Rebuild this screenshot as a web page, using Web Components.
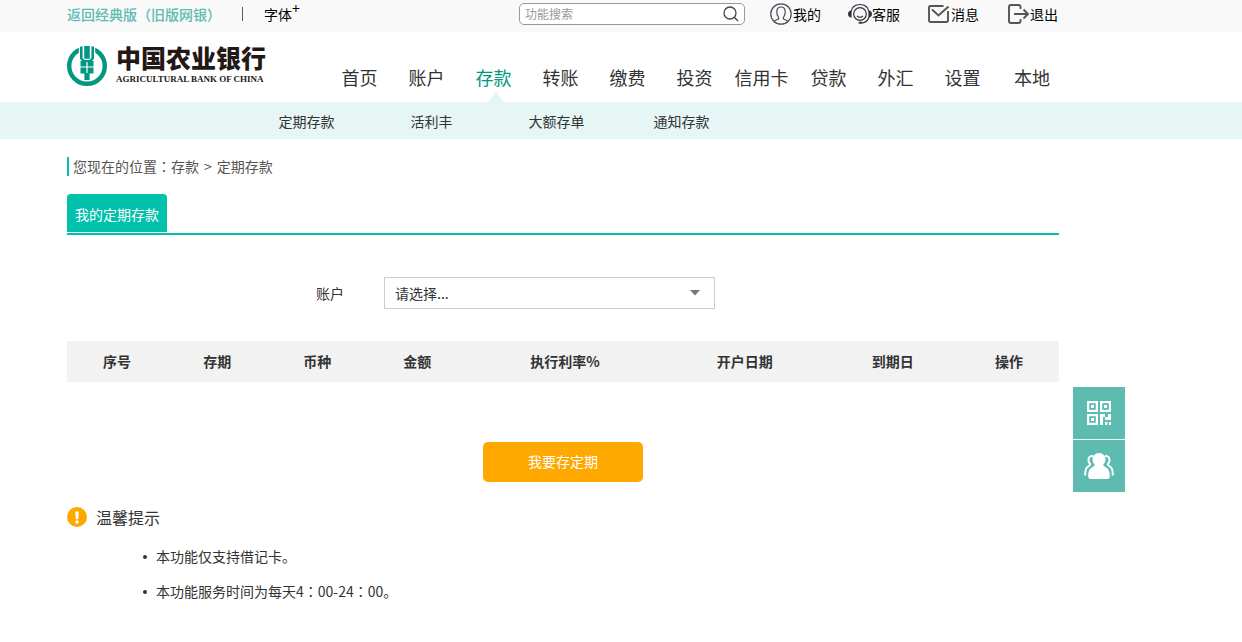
<!DOCTYPE html>
<html lang="zh-CN">
<head>
<meta charset="utf-8">
<meta name="viewport" content="width=device-width, initial-scale=1">
<title>定期存款</title>
<style>
  body {
    margin: 0;
    background: #fff;
    color: #333;
    font: 14px/20px "Noto Sans CJK SC", "Noto Sans", sans-serif;
    --teal: #009882;
    --mint: #00c1ac;
    --sage: #5dbcaf;
    --pale: #e6f6f5;
    --amber: #ffa800;
    --page: 1108px;
    --aside: 116px;
  }
</style>
</head>
<body>
<bank-app></bank-app>

<script>
const define = (name, html) => {
  const template = document.createElement('template');
  template.innerHTML = html;
  customElements.define(name, class extends HTMLElement {
    constructor() {
      super();
      this.attachShadow({ mode: 'open' }).append(template.content.cloneNode(true));
    }
  });
};

/* Centred column that leaves room for the side tools on the right */
define('page-column', `
  <style>
    :host { display: block; box-sizing: border-box; max-width: var(--page); margin: 0 auto; padding-right: var(--aside); }
  </style>
  <slot></slot>`);

/* Full-width punctuation, centred in its em box; kept free of white space because it is inline */
define('wide-mark', `<style>:host { font-family: "Noto Sans CJK TC", sans-serif; }</style><span lang="zh-TW"><slot></slot></span>`);

define('tool-link', `
  <style>
    :host { display: block; }
    a { display: flex; align-items: center; gap: 1px; color: #000; text-decoration: none; white-space: nowrap; }
    ::slotted(svg) { width: 22px; height: 22px; overflow: visible; }
  </style>
  <a href="#"><slot name="icon"></slot><span><slot></slot></span></a>`);

define('search-box', `
  <style>
    :host { display: block; }
    form { display: flex; align-items: center; box-sizing: border-box; width: 226px; height: 22px; border: 1px solid #999; border-radius: 5px; background: #fff; padding: 0 5px; margin: 0; }
    input { flex: 1; min-width: 0; border: 0; padding: 0; outline: 0; background: none; font: 12px/18px "Noto Sans CJK SC", sans-serif; color: #333; }
    input::placeholder { color: #999; opacity: 1; }
    button { display: flex; border: 0; padding: 0; background: none; }
  </style>
  <form>
    <input type="text" placeholder="功能搜索" aria-label="功能搜索">
    <button type="button" aria-label="搜索">
      <svg width="16" height="16" viewBox="0 0 16 16" fill="none" stroke="#444" stroke-width="1.3"><circle cx="7" cy="7" r="6"/><path d="M11.2 11.2 15 15"/></svg>
    </button>
  </form>`);

define('top-bar', `
  <style>
    :host { display: block; background: #f9f9f9; }
    .row { display: flex; align-items: center; height: 32px; padding-bottom: 4px; box-sizing: border-box; }
    .old { color: var(--sage); font-weight: 500; text-decoration: none; white-space: nowrap; }
    .bar { width: 1px; height: 14px; background: #5f5770; margin: 0 21px; }
    button { border: 0; padding: 0; background: none; color: #000; font: inherit; display: flex; white-space: nowrap; }
    sup { font-size: 14px; line-height: 8px; vertical-align: baseline; }
    search-box { margin: 0 25px 0 auto; }
    nav { display: flex; gap: 28px; margin-right: 1px; }
  </style>
  <page-column><div class="row">
    <a class="old" href="#">返回经典版<wide-mark>（</wide-mark>旧版网银<wide-mark>）</wide-mark></a>
    <span class="bar"></span>
    <button type="button">字体<sup>+</sup></button>
    <search-box></search-box>
    <nav aria-label="工具">
      <tool-link>
        <svg slot="icon" viewBox="0 0 22 22" fill="none" stroke="#4a4a58" stroke-width="1.2"><circle cx="11" cy="11" r="10.2"/><path d="M4.2 18.4c.5-1.3 2.3-1.5 3.700-2.100.9-.4 1-1.500.4-2.300C7 12.200 6.700 10.500 6.800 8.500 6.900 5.500 8.500 4 11 4s4.100 1.500 4.200 4.500c.1 2-.2 3.700-1.500 5.500-.6.800-.5 1.900.4 2.300 1.400.6 3.200.8 3.700 2.100"/></svg>我的
      </tool-link>
      <tool-link>
        <svg slot="icon" viewBox="0 0 22 22" fill="none" stroke="#33333f" stroke-width="1.2"><circle cx="11" cy="11" r="6.300"/><path d="M2.200 8.500C3 4 6.500 1.500 11 1.500S19 4 19.800 8.500M20 14c-1 3.500-3.500 5.500-7 6M8 13c1.700 1.700 4.300 1.700 6 0"/><path fill="#33333f" stroke="none" d="M2.600 7.500v7.200C.2 14.500-1 13-1 11s1.200-3.300 3.600-3.500ZM19.400 7.500v7.200c2.400-.2 3.600-1.700 3.600-3.700s-1.200-3.300-3.600-3.500Z"/><rect x="9.500" y="18.800" width="4" height="2" rx="1" fill="#33333f" stroke="none"/></svg>客服
      </tool-link>
      <tool-link>
        <svg slot="icon" viewBox="0 0 22 22" fill="none" stroke="#555" stroke-width="1.900"><path d="M15.500 3H2.200Q1 3 1 4.200v13.600Q1 19 2.200 19h16.600Q20 19 20 17.800V8M4 6.500l6.500 6L20.500 3.500"/></svg>消息
      </tool-link>
      <tool-link>
        <svg slot="icon" viewBox="0 0 22 22" fill="none" stroke="#555" stroke-width="1.900"><path d="M13.500 6V4q0-2-2-2H4Q2 2 2 4v14q0 2 2 2h7.500q2 0 2-2v-2M7 11h13.500M16.500 6.500 21 11l-4.500 4.500"/></svg>退出
      </tool-link>
    </nav>
  </div></page-column>`);

define('bank-logo', `
  <style>
    :host { display: block; }
    a { display: flex; align-items: center; gap: 9px; color: #231815; text-decoration: none; }
    svg { display: block; width: 40px; height: 40px; }
    .names { display: flex; flex-direction: column; white-space: nowrap; }
    .zh { font-size: 25px; line-height: 26px; font-weight: 900; }
    .en { font: bold 9px/18px "Liberation Serif", serif; }
  </style>
  <a href="#">
    <svg viewBox="0 0 40 40">
      <circle cx="20" cy="20" r="17.800" fill="none" stroke="#009882" stroke-width="4.400"/>
      <path fill="#fff" d="M11.800 0h16.400v12h-16.400Z"/>
      <path fill="#009882" d="M13 .8 15.600.3V12l2 2h4.800l2-2V.3L27 .8v12L24 16h-8l-3-3.200ZM17.200 0h5.600v12.800h-5.600Z"/>
      <path fill="#009882" d="M13.500 15h5.900v5.500h-5.900ZM20.600 15h5.900v5.500h-5.900ZM13.500 21.500h5.900V34h-2v-6.500h-3.900ZM20.600 21.500h5.900v6h-3.900V34h-2Z"/>
      <path fill="#009882" d="M19 27h2v7h-2Z"/>
    </svg>
    <span class="names"><span class="zh">中国农业银行</span><span class="en">AGRICULTURAL BANK OF CHINA</span></span>
  </a>`);

define('nav-item', `
  <style>
    :host { display: block; position: relative; text-align: center; }
    a { display: block; color: #333; font-size: 18px; line-height: 26px; padding-bottom: 12px; text-decoration: none; white-space: nowrap; }
    :host([active]) a { color: var(--teal); }
    :host([active])::after { content: ""; position: absolute; left: 50%; bottom: 0; margin-left: -6px; border: solid transparent; border-width: 0 8px 11px; border-bottom-color: var(--pale); }
  </style>
  <a href="#"><slot></slot></a>`);

define('main-header', `
  <style>
    :host { display: block; }
    .row { display: flex; justify-content: space-between; align-items: flex-end; height: 70px; }
    bank-logo { padding-bottom: 14px; }
    nav { display: grid; grid-template-columns: repeat(10, 67px) 72px; margin-right: -9px; }
  </style>
  <page-column><div class="row">
    <bank-logo></bank-logo>
    <nav aria-label="主导航">
      <nav-item>首页</nav-item><nav-item>账户</nav-item><nav-item active>存款</nav-item><nav-item>转账</nav-item><nav-item>缴费</nav-item><nav-item>投资</nav-item><nav-item>信用卡</nav-item><nav-item>贷款</nav-item><nav-item>外汇</nav-item><nav-item>设置</nav-item><nav-item>本地</nav-item>
    </nav>
  </div></page-column>`);

define('sub-nav', `
  <style>
    :host { display: block; background: var(--pale); }
    nav { display: grid; grid-template-columns: repeat(4, 125px); padding: 1px 0 0 177px; text-align: center; }
    a { color: #333; text-decoration: none; line-height: 36px; }
  </style>
  <page-column><nav aria-label="存款">
    <a href="#">定期存款</a><a href="#">活利丰</a><a href="#">大额存单</a><a href="#">通知存款</a>
  </nav></page-column>`);

define('bread-crumb', `
  <style>
    :host { display: flex; gap: 5px; border-left: 2px solid var(--mint); padding-left: 4px; line-height: 19px; color: #555; }
  </style>
  <slot></slot>`);

define('tab-strip', `
  <style>
    :host { display: block; border-bottom: 2px solid var(--mint); padding-bottom: 1px; }
    button { display: block; width: 100px; height: 38px; border: 0; border-radius: 4px 4px 0 0; background: var(--mint); color: #fff; font: inherit; padding: 2px 0 0; white-space: nowrap; }
  </style>
  <button type="button" role="tab" aria-selected="true"><slot></slot></button>`);

define('account-picker', `
  <style>
    :host { display: flex; align-items: center; padding-left: 249px; }
    label { width: 68px; }
    .box { display: grid; align-items: center; width: 331px; }
    .box > * { grid-area: 1 / 1; }
    select { appearance: none; box-sizing: border-box; width: 100%; height: 32px; border: 1px solid #ccc; border-radius: 0; background: #fff; color: #333; font: inherit; padding: 0 32px 0 10px; }
    svg { justify-self: end; margin-right: 15px; pointer-events: none; }
  </style>
  <label for="account">账户</label>
  <div class="box">
    <select id="account"><option>请选择...</option></select>
    <svg width="10" height="6" viewBox="0 0 10 6"><path d="M0 0h10L5 5.500Z" fill="#777"/></svg>
  </div>`);

define('deposit-table', `
  <style>
    :host { display: block; }
    table { width: 100%; table-layout: fixed; border-collapse: collapse; background: #f2f2f2; }
    th { height: 41px; box-sizing: border-box; padding: 0 0 2px; font-weight: 700; white-space: nowrap; }
    .s { width: 100px; } .rate { width: 195px; } .open { width: 164px; } .due { width: 132px; }
  </style>
  <table>
    <thead><tr>
      <th class="s" scope="col">序号</th><th class="s" scope="col">存期</th><th class="s" scope="col">币种</th><th class="s" scope="col">金额</th><th class="rate" scope="col">执行利率%</th><th class="open" scope="col">开户日期</th><th class="due" scope="col">到期日</th><th class="s" scope="col">操作</th>
    </tr></thead>
  </table>`);

define('action-button', `
  <style>
    :host { display: flex; justify-content: center; }
    button { width: 160px; height: 40px; border: 0; border-radius: 5px; background: var(--amber); color: #fff; font: inherit; padding: 0 0 2px; }
  </style>
  <button type="button"><slot></slot></button>`);

define('tip-panel', `
  <style>
    :host { display: block; }
    h2 { display: flex; align-items: center; gap: 9px; margin: 0; font-size: 16px; line-height: 20px; font-weight: 400; }
    ul { list-style: none; margin: 12px 0 0; padding: 0 0 0 76px; line-height: 35px; }
    li { display: flex; align-items: center; gap: 9px; }
    li::before { content: ""; width: 4px; height: 4px; border-radius: 50%; background: #333; }
  </style>
  <h2><svg width="20" height="20" viewBox="0 0 20 20"><circle cx="10" cy="10" r="10" fill="#ffa800"/><path fill="#fff" d="M8.200 4.500h3.600l-.6 7.700H8.800Z"/><circle cx="10" cy="15" r="1.700" fill="#fff"/></svg><span>温馨提示</span></h2>
  <ul>
    <li><span>本功能仅支持借记卡。</span></li>
    <li><span>本功能服务时间为每天4<wide-mark>：</wide-mark>00-24<wide-mark>：</wide-mark>00。</span></li>
  </ul>`);

define('side-tools', `
  <style>
    :host { display: grid; gap: 1px; align-content: start; width: 52px; }
    button { display: grid; place-items: center; height: 52px; border: 0; padding: 0; background: var(--sage); }
  </style>
  <button type="button" aria-label="二维码">
    <svg width="24" height="24" viewBox="0 0 24 24"><g fill="none" stroke="#fff" stroke-width="2.200"><rect x="1.100" y="1.100" width="8.800" height="8.800"/><rect x="14.100" y="1.100" width="8.800" height="8.800"/><rect x="1.100" y="14.100" width="8.800" height="8.800"/></g><path fill="#fff" d="M4 4h3v3H4ZM17 4h3v3h-3ZM4 17h3v3H4ZM13 13h5v3h3v-3h3v6h-6v-3h-2v8h-3ZM18 21h2.500v3H18ZM22 21h2v3h-2Z"/></svg>
  </button>
  <button type="button" aria-label="客户服务">
    <svg width="30" height="28" viewBox="0 0 30 28"><path fill="none" stroke="#fff" stroke-width="2" d="M9 4C5.500 3.500 4.300 6 4.500 8.500c.1 1.800.9 2.700 1.700 3.500-.2 1.900-2.200 2.300-3.400 3.700C1.500 17.200 1.200 20 1.200 23.500M21 4c3.500-.5 4.700 2 4.500 4.500-.1 1.800-.9 2.700-1.700 3.500.2 1.900 2.200 2.300 3.400 3.700 1.300 1.500 1.600 4.300 1.600 7.800"/><path fill="#fff" d="M15 1c4 0 6.700 3 6.500 6.500-.1 2.300-1.300 4.300-2.300 5.300.3 1.700 2 2.100 3.600 3.200 2.600 1.800 3 5.500 3 8.500 0 1.500-.8 2.500-2.300 2.500h-17c-1.500 0-2.300-1-2.300-2.500 0-3 .4-6.700 3-8.500 1.600-1.100 3.300-1.500 3.600-3.200-1-1-2.200-3-2.300-5.300C8.300 4 11 1 15 1Z"/></svg>
  </button>`);

define('bank-app', `
  <style>
    :host { display: block; }
    .content { display: grid; grid-template-columns: minmax(0, 1fr) 102px; gap: 14px; max-width: var(--page); margin: 0 auto; }
    main { padding: 18px 0 32px; }
    tab-strip { margin-top: 18px; }
    account-picker { margin-top: 42px; }
    deposit-table { margin-top: 32px; }
    action-button { margin-top: 60px; }
    tip-panel { margin-top: 25px; }
    side-tools { margin-top: 248px; }
  </style>
  <top-bar></top-bar>
  <main-header></main-header>
  <sub-nav></sub-nav>
  <div class="content">
    <main>
      <bread-crumb><span>您现在的位置<wide-mark>：</wide-mark>存款</span><span>&gt;</span><span>定期存款</span></bread-crumb>
      <tab-strip>我的定期存款</tab-strip>
      <account-picker></account-picker>
      <deposit-table></deposit-table>
      <action-button>我要存定期</action-button>
      <tip-panel></tip-panel>
    </main>
    <side-tools></side-tools>
  </div>`);
</script>
</body>
</html>
